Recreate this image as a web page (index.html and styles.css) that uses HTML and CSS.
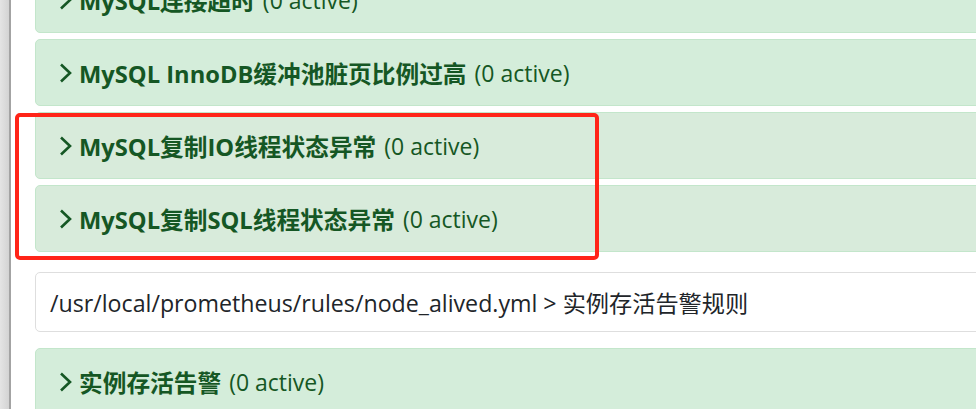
FILE: index.html
```html
<!DOCTYPE html>
<html lang="en">
<head>
  <meta charset="UTF-8" />
  <meta name="viewport" content="width=device-width, initial-scale=1.0"/>
  <title>Alerts</title>
  <link rel="stylesheet" href="styles.css">
</head>
<body>

  <div class="page">
    <div class="gutter"></div>

    <div class="rules">
      <div class="rule">
        <svg class="chevron" viewBox="0 0 13 20"><polyline points="2,1.5 11,10 2,18.5"/></svg>
        <span class="rule-name">MySQL连接超时</span>
        <span class="rule-count">(0 active)</span>
      </div>
      <div class="rule">
        <svg class="chevron" viewBox="0 0 13 20"><polyline points="2,1.5 11,10 2,18.5"/></svg>
        <span class="rule-name">MySQL InnoDB缓冲池脏页比例过高</span>
        <span class="rule-count">(0 active)</span>
      </div>
      <div class="rule rule-marked">
        <svg class="chevron" viewBox="0 0 13 20"><polyline points="2,1.5 11,10 2,18.5"/></svg>
        <span class="rule-name">MySQL复制IO线程状态异常</span>
        <span class="rule-count">(0 active)</span>
      </div>
      <div class="rule rule-marked">
        <svg class="chevron" viewBox="0 0 13 20"><polyline points="2,1.5 11,10 2,18.5"/></svg>
        <span class="rule-name">MySQL复制SQL线程状态异常</span>
        <span class="rule-count">(0 active)</span>
      </div>

      <div class="group-header">/usr/local/prometheus/rules/node_alived.yml &gt; 实例存活告警规则</div>

      <div class="rule">
        <svg class="chevron" viewBox="0 0 13 20"><polyline points="2,1.5 11,10 2,18.5"/></svg>
        <span class="rule-name">实例存活告警</span>
        <span class="rule-count">(0 active)</span>
      </div>
    </div>

    <!-- annotation drawn over the screenshot -->
    <div class="highlight"></div>
  </div>

</body>
</html>
```

FILE: styles.css
```css
* {
  box-sizing: border-box;
}

html, body {
  margin: 0;
  padding: 0;
  height: 100%;
  overflow: hidden;
  background-color: #ffffff;
}

body {
  font-family: 'Open Sans', 'Noto Sans CJK SC', sans-serif;
  font-size: 23px;
}

.page {
  position: relative;
  display: flex;
  height: 100%;
}

.gutter {
  flex: none;
  width: 11px;
  background: linear-gradient(to right, #e4e4e4, #d3d3d3);
  border-right: 2px solid #a3a3a3;
}

.rules {
  flex: none;
  width: 1000px;
  margin-top: -34px;
  padding-left: 24px;
}

.rule {
  display: flex;
  align-items: center;
  height: 67px;
  margin-bottom: 6px;
  padding-left: 23px;
  background-color: #d4edda;
  border: 1px solid #c3e6cb;
  border-radius: 5px;
  color: #155724;
  white-space: nowrap;
}

.rule-marked {
  background-color: #d8ebdb;
}

.chevron {
  width: 13px;
  height: 20px;
  margin-right: 7px;
  fill: none;
  stroke: #155724;
  stroke-width: 2.6;
}

.rule-name {
  font-size: 23.7px;
  font-weight: 700;
  margin-right: 8px;
}

.group-header {
  display: flex;
  align-items: center;
  height: 60px;
  margin: 20px 0 16px;
  padding-left: 14px;
  border: 1px solid #dedede;
  border-radius: 5px;
  color: #212529;
  font-size: 23.2px;
  white-space: nowrap;
}

.highlight {
  position: absolute;
  left: 15px;
  top: 113px;
  width: 584px;
  height: 147px;
  border: 4px solid #ff2418;
  border-radius: 5px;
}
```
